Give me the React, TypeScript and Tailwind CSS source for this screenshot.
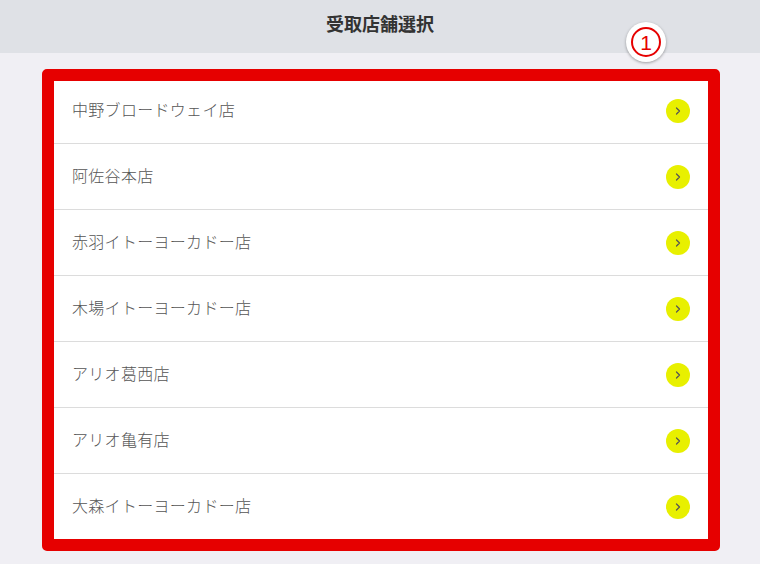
import { ChevronRight } from "lucide-react"

const stores = [
    "中野ブロードウェイ店",
    "阿佐谷本店",
    "赤羽イトーヨーカドー店",
    "木場イトーヨーカドー店",
    "アリオ葛西店",
    "アリオ亀有店",
    "大森イトーヨーカドー店"
]

export default function App() {
    return (
        <div
            className="w-[760px] h-[564px] bg-[#f0eff4] overflow-hidden"
            style={{ fontFamily: '"Noto Sans CJK JP", "Noto Sans", sans-serif' }}
        >
            {/* Header */}
            <div className="h-[53px] bg-[#dfe1e6] flex items-start justify-center pt-[10px]">
                <h1 className="text-[18px] font-bold text-[#333] leading-[26px]">受取店舗選択</h1>
            </div>

            {/* Store list with highlight frame */}
            <div className="relative mx-[42px] mt-[16px] w-[678px] border-[12px] border-[#e60000] rounded-[5px] bg-white">
                {stores.map((name, i) => (
                    <div
                        key={name}
                        className={
                            i === 0
                                ? "h-[62px] pb-[6px] flex items-center justify-between pl-[18px] pr-[18px]"
                                : "h-[66px] pb-[3px] flex items-center justify-between pl-[18px] pr-[18px] border-t border-[#dcdcdc]"
                        }
                    >
                        <span className="text-[16px] font-light text-[#555] tracking-[0.3px]">{name}</span>
                        <span className="w-[24px] h-[24px] mt-[3px] rounded-full bg-[#e8f000] flex items-center justify-center">
                            <ChevronRight className="w-[12px] h-[12px] text-[#555]" strokeWidth={2.5} />
                        </span>
                    </div>
                ))}

                {/* Callout number */}
                <div className="absolute left-[572px] top-[-59px] w-[40px] h-[40px] rounded-full bg-white shadow-[0_1px_3px_rgba(0,0,0,0.35)] flex items-center justify-center">
                    <span className="w-[30px] h-[30px] rounded-full border-2 border-[#e60000] text-[#e60000] text-[21px] font-[Liberation_Sans] leading-none flex items-center justify-center">
                        1
                    </span>
                </div>
            </div>
        </div>
    )
}
